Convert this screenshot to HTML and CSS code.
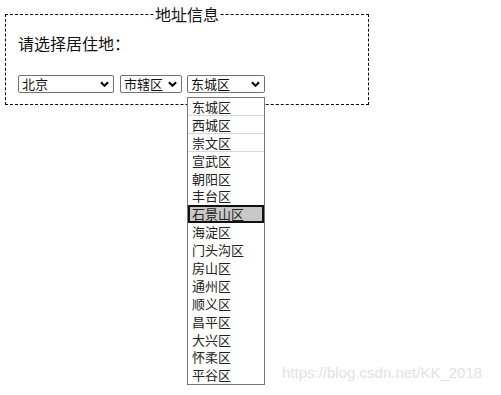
FILE: index.html
```html
<!DOCTYPE html>
<html lang="zh">
<head>
<meta charset="utf-8">
<link rel="stylesheet" href="styles.css">
</head>
<body>
<div class="page">
  <fieldset class="box">
    <legend class="legend">地址信息</legend>
    <div class="label">请选择居住地：</div>
    <div class="row">
      <span class="sel sel-prov">北京<svg class="chev" viewBox="0 0 10 6"><path d="M1 1 L5 5 L9 1" /></svg></span>
      <span class="sel sel-city">市辖区<svg class="chev" viewBox="0 0 10 6"><path d="M1 1 L5 5 L9 1" /></svg></span>
      <span class="sel sel-dist">东城区<svg class="chev" viewBox="0 0 10 6"><path d="M1 1 L5 5 L9 1" /></svg>
        <ul class="menu">
          <li class="item sep">东城区</li>
          <li class="item sep">西城区</li>
          <li class="item sep">崇文区</li>
          <li class="item">宣武区</li>
          <li class="item">朝阳区</li>
          <li class="item">丰台区</li>
          <li class="item active">石景山区</li>
          <li class="item">海淀区</li>
          <li class="item">门头沟区</li>
          <li class="item">房山区</li>
          <li class="item">通州区</li>
          <li class="item">顺义区</li>
          <li class="item">昌平区</li>
          <li class="item">大兴区</li>
          <li class="item">怀柔区</li>
          <li class="item">平谷区</li>
        </ul>
      </span>
    </div>
  </fieldset>
  <div class="watermark">https://blog.csdn.net/KK_2018</div>
</div>
</body>
</html>
```
FILE: styles.css
```css
html, body {
  margin: 0;
  padding: 0;
  background: #fff;
}
body {
  font-family: "Noto Sans CJK SC", "Noto Sans", sans-serif;
  color: #111;
  width: 501px;
  height: 395px;
  overflow: hidden;
}
.page {
  position: relative;
  height: 395px;
  padding-top: 4px;
  box-sizing: border-box;
}
.box {
  box-sizing: border-box;
  width: 364px;
  margin: 0 0 0 5px;
  border: 1px dashed #000;
  padding: 8px 12px 11px 12px;
  min-width: 0;
}
.legend {
  margin: 0 auto;
  padding: 0 1px;
  font-size: 16px;
  line-height: 20px;
  height: 20px;
}
.label {
  font-size: 16px;
  line-height: 20px;
  margin-top: 1px;
}
.row {
  display: flex;
  gap: 6px;
  margin-top: 22px;
}
.sel {
  position: relative;
  box-sizing: border-box;
  height: 18px;
  border: 1px solid #707070;
  border-radius: 2px;
  font-size: 13px;
  line-height: 16px;
  padding-left: 3px;
  display: flex;
  align-items: center;
  justify-content: space-between;
  color: #111;
}
.sel-prov { width: 96px; }
.sel-city { width: 62px; }
.sel-dist { width: 78px; margin-left: -1px; }
.chev {
  width: 9px;
  height: 6px;
  margin-right: 4px;
  fill: none;
  stroke: #000;
  stroke-width: 2.2;
}
.menu {
  position: absolute;
  left: -1px;
  top: 21px;
  width: 78px;
  box-sizing: border-box;
  margin: 0;
  padding: 0;
  list-style: none;
  border: 1px solid #777;
  background: #fff;
}
.item {
  box-sizing: border-box;
  height: 17.9px;
  line-height: 17.9px;
  font-size: 13px;
  padding-left: 4px;
  color: #222;
}
.item.sep {
  border-bottom: 1px solid #d8d8d8;
}
.item.active {
  background: #c8c8c8;
  border: 2px solid #111;
  padding-left: 2px;
  line-height: 13.9px;
}
.watermark {
  position: absolute;
  left: 282px;
  top: 364px;
  font-family: "Liberation Sans", Arial, sans-serif;
  font-size: 15px;
  color: #e2e2e2;
}
```
